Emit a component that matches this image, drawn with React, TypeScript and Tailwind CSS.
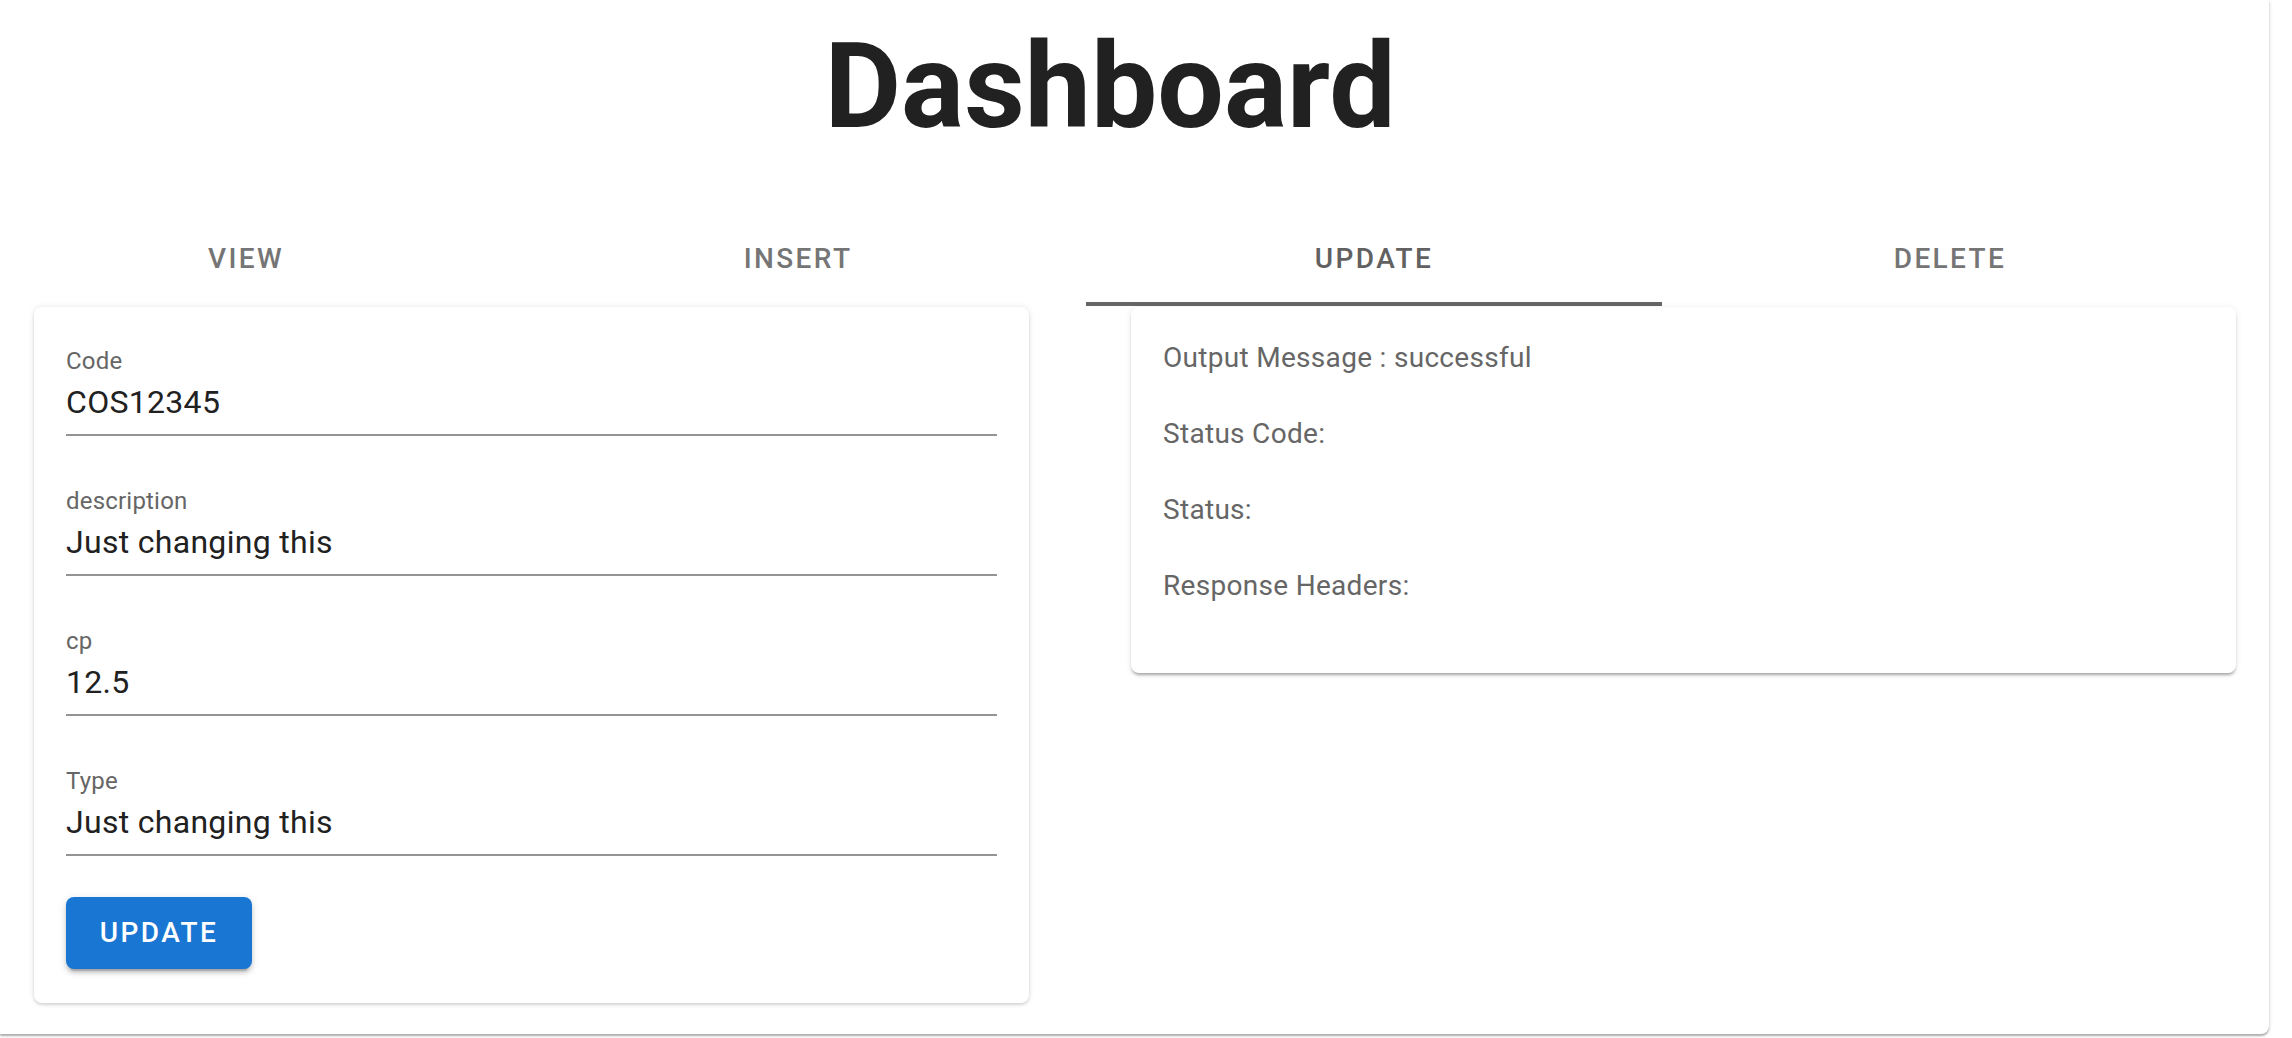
import React from "react";

const fields = [
  { label: "Code", value: "COS12345" },
  { label: "description", value: "Just changing this" },
  { label: "cp", value: "12.5" },
  { label: "Type", value: "Just changing this" },
];

const tabs = [
  { label: "VIEW", width: "w-[528px]", selected: false },
  { label: "INSERT", width: "w-[576px]", selected: false },
  { label: "UPDATE", width: "w-[576px]", selected: true },
  { label: "DELETE", width: "w-[576px]", selected: false },
];

const lines = ["Output Message : successful", "Status Code:", "Status:", "Response Headers:"];

export default function App() {
  return (
    <div className="h-[1038px] w-[2292px] overflow-hidden bg-white font-['Roboto',sans-serif]">
      <div className="h-[1034px] w-[2269px] rounded-br-[8px] bg-white shadow-[0_2px_2px_rgba(0,0,0,0.28),0_1px_5px_rgba(0,0,0,0.1)]">
        <div className="-ml-[18px] w-[2256px] pt-[15px]">
          <h1 className="h-[144px] text-center text-[118px] font-bold leading-[144px] text-[#212121]">
            Dashboard
          </h1>
          <div className="mt-[51px] flex h-[96px]">
            {tabs.map((t) => (
              <div
                key={t.label}
                className={`${t.width} flex h-[96px] items-center justify-center border-b-[4px] pt-[6px] ${
                  t.selected ? "border-[#666666] text-[#616161]" : "border-transparent text-[#757575]"
                }`}
              >
                <span className="text-[28px] font-medium uppercase leading-[40px] tracking-[2.4px]">{t.label}</span>
              </div>
            ))}
          </div>
          <div className="mt-[1px] flex items-start">
            <div className="ml-[52px] w-[995px] rounded-[8px] bg-white px-[32px] pb-[34px] pt-[37px] shadow-[0_2px_3px_rgba(0,0,0,0.12),0_0_6px_rgba(0,0,0,0.1)]">
              <div className="flex flex-col gap-[48px]">
                {fields.map((f) => (
                  <div key={f.label} className="border-b-2 border-[#949494] pb-[9px]">
                    <div className="h-[35px] text-[24px] leading-[34px] tracking-[0.2px] text-[#666666]">{f.label}</div>
                    <div className="h-[46px] text-[32px] leading-[46px] tracking-[0.3px] text-[#212121]">{f.value}</div>
                  </div>
                ))}
              </div>
              <button className="mt-[41px] flex h-[72px] w-[186px] items-center justify-center rounded-[8px] bg-[#1976d2] text-[28px] font-medium uppercase tracking-[2.4px] text-white shadow-[0_6px_2px_-4px_rgba(0,0,0,0.2),0_4px_4px_0_rgba(0,0,0,0.14),0_2px_10px_0_rgba(0,0,0,0.12)]">
                Update
              </button>
            </div>
            <div className="ml-[102px] w-[1105px] rounded-[8px] bg-white px-[32px] pb-[67px] pt-[31px] shadow-[0_3px_3px_-1px_rgba(0,0,0,0.3),0_1px_6px_rgba(0,0,0,0.1)]">
              <div className="flex flex-col gap-[36px]">
                {lines.map((l) => (
                  <div key={l} className="h-[40px] text-[28px] leading-[40px] tracking-[0.3px] text-[#666666]">
                    {l}
                  </div>
                ))}
              </div>
            </div>
          </div>
        </div>
      </div>
    </div>
  );
}
